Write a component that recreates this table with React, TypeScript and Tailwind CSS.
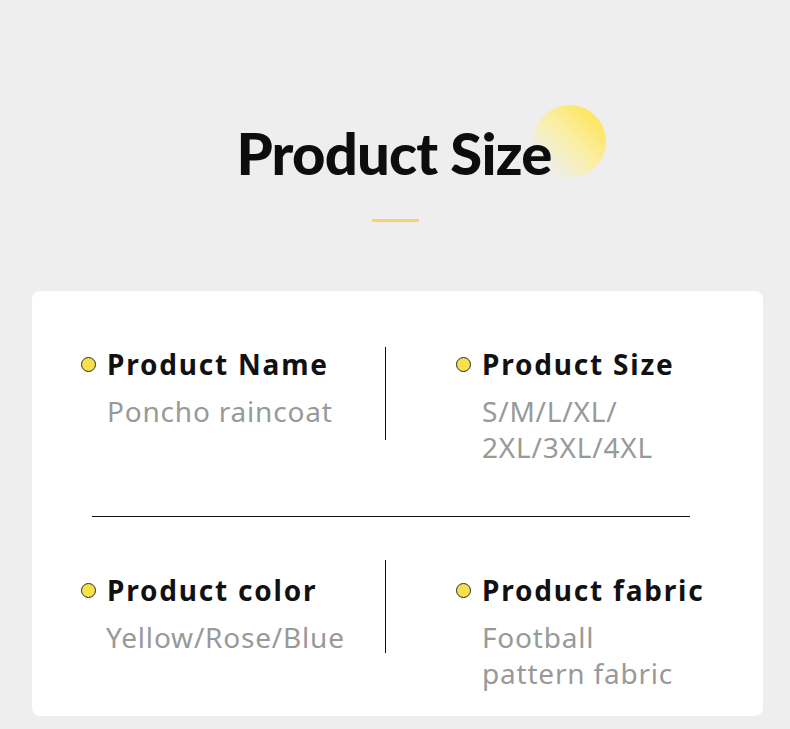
import React from "react";

function Dot() {
  return (
    <span className="inline-block w-[15px] h-[15px] rounded-full bg-[#f6e04c] border border-[#2a2a2a] shrink-0" />
  );
}

function Item({ label, lines, valueIndent = "ml-[26px]" }: { label: string; lines: string[]; valueIndent?: string }) {
  return (
    <div className="flex flex-col">
      <div className="flex items-center gap-[11px] h-[36px]">
        <Dot />
        <span className="text-[28px] leading-[36px] font-bold tracking-[1.8px] text-[#111]">{label}</span>
      </div>
      <div className={`mt-[11px] ${valueIndent} text-[28px] leading-[36px] tracking-[0.8px] text-[#999999]`}>
        {lines.map((l) => (
          <div key={l}>{l}</div>
        ))}
      </div>
    </div>
  );
}

export default function App() {
  return (
    <div className="w-[790px] h-[729px] bg-[#eeeeee] overflow-hidden" style={{ fontFamily: '"Noto Sans", sans-serif' }}>
      <div className="pt-[118px] flex flex-col items-center">
        <div className="relative -translate-x-[1px]">
          <div
            className="absolute left-[calc(100%-19px)] top-[-13px] w-[73px] h-[73px] rounded-full"
            style={{ background: "linear-gradient(to bottom left, #fde23f 0%, #fbeea0 45%, rgba(238,238,238,0) 85%)" }}
          />
          <h1
            className="relative text-[58px] leading-[70px] font-black tracking-[-0.8px] text-[#0d0d0d]"
            style={{ fontFamily: 'Lato, sans-serif' }}
          >
            Product Size
          </h1>
        </div>
        <div className="mt-[31px] w-[47px] h-[3px] bg-[#f5d26a]" />
      </div>
      <div className="mt-[69px] ml-[32px] w-[731px] h-[425px] bg-white rounded-[8px] pt-[55px] pl-[49px]">
        <div className="flex items-start">
          <div className="w-[304px]">
            <Item label="Product Name" lines={["Poncho raincoat"]} />
          </div>
          <div className="mt-[1px] w-px h-[93px] bg-[#111]" />
          <div className="pl-[70px]">
            <Item label="Product Size" lines={["S/M/L/XL/", "2XL/3XL/4XL"]} />
          </div>
        </div>
        <div className="mt-[51px] ml-[11px] w-[598px] h-px bg-[#111]" />
        <div className="mt-[43px] flex items-start">
          <div className="w-[304px] mt-[12px]">
            <Item label="Product color" lines={["Yellow/Rose/Blue"]} valueIndent="ml-[25px]" />
          </div>
          <div className="w-px h-[93px] bg-[#111]" />
          <div className="pl-[70px] mt-[12px]">
            <Item label="Product fabric" lines={["Football", "pattern fabric"]} />
          </div>
        </div>
      </div>
    </div>
  );
}
